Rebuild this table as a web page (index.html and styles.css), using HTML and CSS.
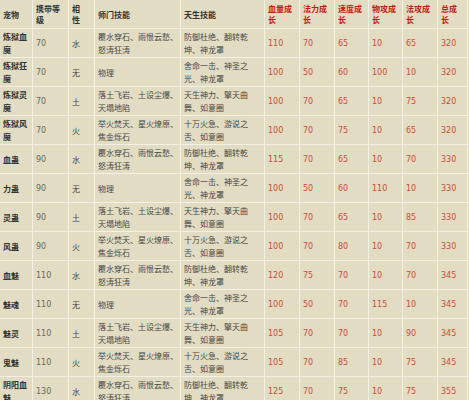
FILE: index.html
```html
<!DOCTYPE html>
<html lang="zh">
<head>
<meta charset="utf-8">
<title>宠物成长表</title>
<link rel="stylesheet" href="styles.css">
</head>
<body>
<table class="pets">
  <colgroup>
    <col class="c1"><col class="c2"><col class="c3"><col class="c4"><col class="c5"><col class="c6">
    <col class="c7"><col class="c8"><col class="c9"><col class="c10"><col class="c11"><col class="c12">
  </colgroup>
  <thead>
    <tr>
      <th>宠物</th><th>携带等<br>级</th><th>相<br>性</th><th>师门技能</th><th>天生技能</th>
      <th class="red">血量成<br>长</th><th class="red">法力成<br>长</th><th class="red">速度成<br>长</th>
      <th class="red">物攻成<br>长</th><th class="red">法攻成<br>长</th><th class="red">总成<br>长</th><th></th>
    </tr>
  </thead>
  <tbody>
    <tr><td class="name">炼狱血魔</td><td class="lv">70</td><td class="el">水</td><td>覆水穿石、雨恨云愁、怒涛狂涛</td><td>防御杜绝、翻转乾坤、神龙罩</td><td class="n">110</td><td class="n">70</td><td class="n">65</td><td class="n">10</td><td class="n">65</td><td class="n">320</td><td></td></tr>
    <tr><td class="name">炼狱狂魔</td><td class="lv">70</td><td class="el">无</td><td>物理</td><td>舍命一击、神圣之光、神龙罩</td><td class="n">100</td><td class="n">50</td><td class="n">60</td><td class="n">100</td><td class="n">10</td><td class="n">320</td><td></td></tr>
    <tr><td class="name">炼狱灵魔</td><td class="lv">70</td><td class="el">土</td><td>落土飞岩、土设尘爆、天塌地陷</td><td>天生神力、擎天曲舞、如意圈</td><td class="n">100</td><td class="n">70</td><td class="n">65</td><td class="n">10</td><td class="n">75</td><td class="n">320</td><td></td></tr>
    <tr><td class="name">炼狱风魔</td><td class="lv">70</td><td class="el">火</td><td>举火焚天、星火燎原、焦金烁石</td><td>十万火急、游说之舌、如意圈</td><td class="n">100</td><td class="n">70</td><td class="n">75</td><td class="n">10</td><td class="n">65</td><td class="n">320</td><td></td></tr>
    <tr><td class="name">血蛊</td><td class="lv">90</td><td class="el">水</td><td>覆水穿石、雨恨云愁、怒涛狂涛</td><td>防御杜绝、翻转乾坤、神龙罩</td><td class="n">115</td><td class="n">70</td><td class="n">65</td><td class="n">10</td><td class="n">70</td><td class="n">330</td><td></td></tr>
    <tr><td class="name">力蛊</td><td class="lv">90</td><td class="el">无</td><td>物理</td><td>舍命一击、神圣之光、神龙罩</td><td class="n">100</td><td class="n">50</td><td class="n">60</td><td class="n">110</td><td class="n">10</td><td class="n">330</td><td></td></tr>
    <tr><td class="name">灵蛊</td><td class="lv">90</td><td class="el">土</td><td>落土飞岩、土设尘爆、天塌地陷</td><td>天生神力、擎天曲舞、如意圈</td><td class="n">100</td><td class="n">70</td><td class="n">65</td><td class="n">10</td><td class="n">85</td><td class="n">330</td><td></td></tr>
    <tr><td class="name">风蛊</td><td class="lv">90</td><td class="el">火</td><td>举火焚天、星火燎原、焦金烁石</td><td>十万火急、游说之舌、如意圈</td><td class="n">100</td><td class="n">70</td><td class="n">80</td><td class="n">10</td><td class="n">70</td><td class="n">330</td><td></td></tr>
    <tr><td class="name">血魅</td><td class="lv">110</td><td class="el">水</td><td>覆水穿石、雨恨云愁、怒涛狂涛</td><td>防御杜绝、翻转乾坤、神龙罩</td><td class="n">120</td><td class="n">75</td><td class="n">70</td><td class="n">10</td><td class="n">70</td><td class="n">345</td><td></td></tr>
    <tr><td class="name">魅魂</td><td class="lv">110</td><td class="el">无</td><td>物理</td><td>舍命一击、神圣之光、神龙罩</td><td class="n">100</td><td class="n">50</td><td class="n">70</td><td class="n">115</td><td class="n">10</td><td class="n">345</td><td></td></tr>
    <tr><td class="name">魅灵</td><td class="lv">110</td><td class="el">土</td><td>落土飞岩、土设尘爆、天塌地陷</td><td>天生神力、擎天曲舞、如意圈</td><td class="n">105</td><td class="n">70</td><td class="n">70</td><td class="n">10</td><td class="n">90</td><td class="n">345</td><td></td></tr>
    <tr><td class="name">鬼魅</td><td class="lv">110</td><td class="el">火</td><td>举火焚天、星火燎原、焦金烁石</td><td>十万火急、游说之舌、如意圈</td><td class="n">105</td><td class="n">70</td><td class="n">85</td><td class="n">10</td><td class="n">75</td><td class="n">345</td><td></td></tr>
    <tr><td class="name">阴阳血魅</td><td class="lv">130</td><td class="el">水</td><td>覆水穿石、雨恨云愁、怒涛狂涛</td><td>防御杜绝、翻转乾坤、神龙罩</td><td class="n">125</td><td class="n">70</td><td class="n">75</td><td class="n">10</td><td class="n">75</td><td class="n">355</td><td></td></tr>
  </tbody>
</table>
</body>
</html>
```
FILE: styles.css
```css
html, body {
  margin: 0;
  padding: 0;
  overflow: hidden;
  background: #e1dcc2;
}

.pets {
  margin: -1px 0 0 -1px;
  table-layout: fixed;
  width: 490px;
  border-collapse: separate;
  border-spacing: 1px;
  background: #f3f1e6;
  font-family: "Noto Sans CJK SC", "DejaVu Sans", sans-serif;
  font-size: 8px;
  line-height: 13px;
  color: #484848;
}

.c1 { width: 32px; }
.c2 { width: 35px; }
.c3 { width: 25px; }
.c4 { width: 85px; }
.c5 { width: 83px; }
.c6 { width: 34px; }
.c7 { width: 34px; }
.c8 { width: 33px; }
.c9 { width: 33px; }
.c10 { width: 34px; }
.c11 { width: 29px; }
.c12 { width: 21px; }

.pets th,
.pets td {
  background: #e1dcc2;
  padding: 1px 2px 1px 3px;
  height: 26px;
  text-align: left;
  vertical-align: middle;
  overflow: hidden;
}

.pets th {
  font-weight: bold;
  line-height: 11px;
  color: #333;
}

.pets th.red {
  color: #c41a12;
}

.pets td.name {
  font-weight: bold;
  color: #333;
}

.pets td.lv {
  font-family: "DejaVu Sans", sans-serif;
  color: #6a6a60;
}

.pets td.el {
  color: #444;
}

.pets td.n {
  font-family: "DejaVu Sans", sans-serif;
  color: #cf4a3c;
}
```
